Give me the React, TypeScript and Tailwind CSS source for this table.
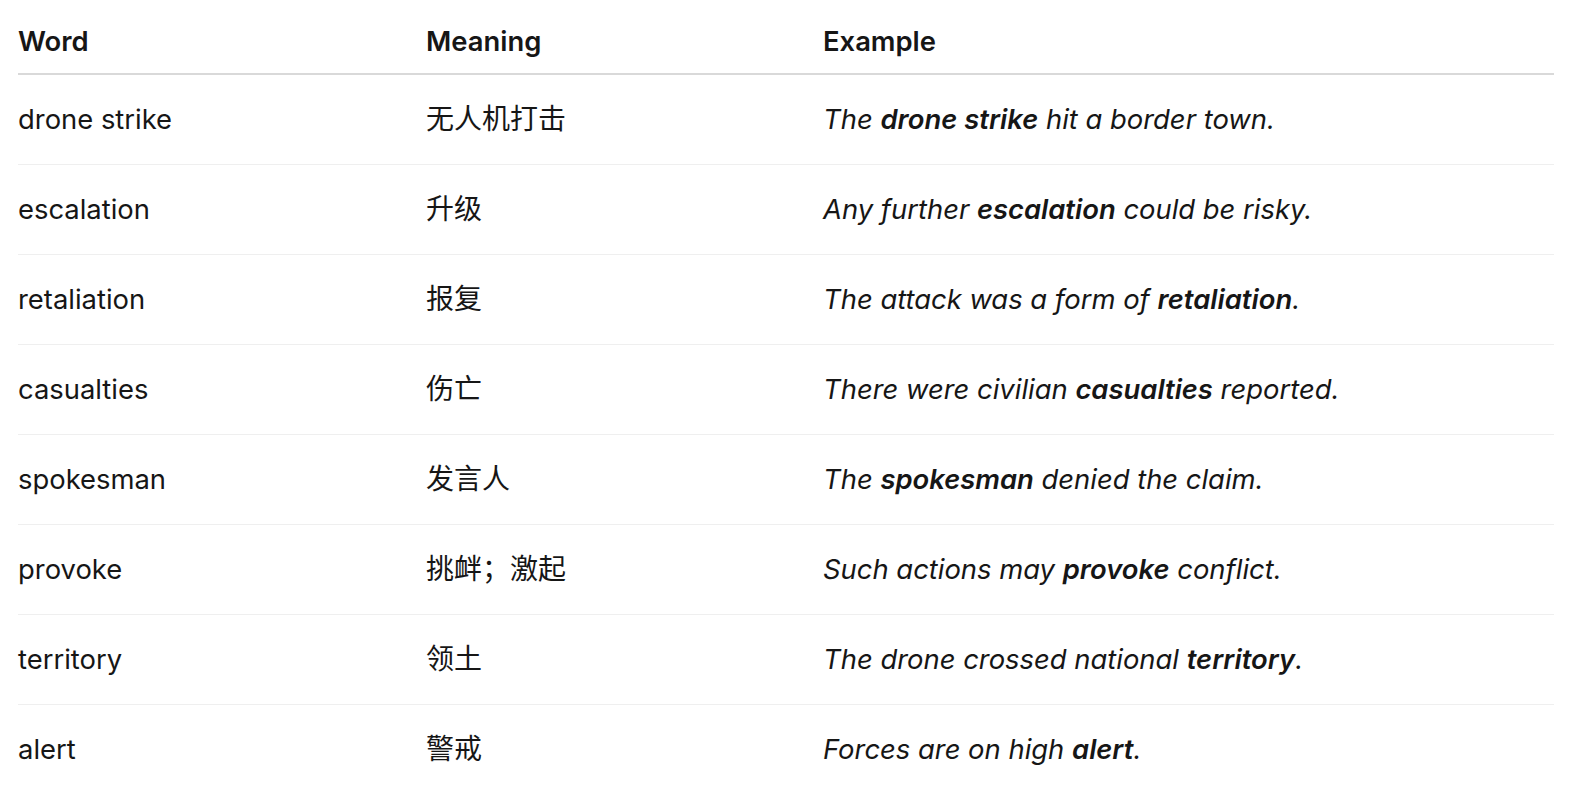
const rows: { word: string; meaning: string; example: [string, string, string] }[] = [
  { word: "drone strike", meaning: "无人机打击", example: ["The ", "drone strike", " hit a border town."] },
  { word: "escalation", meaning: "升级", example: ["Any further ", "escalation", " could be risky."] },
  { word: "retaliation", meaning: "报复", example: ["The attack was a form of ", "retaliation", "."] },
  { word: "casualties", meaning: "伤亡", example: ["There were civilian ", "casualties", " reported."] },
  { word: "spokesman", meaning: "发言人", example: ["The ", "spokesman", " denied the claim."] },
  { word: "provoke", meaning: "挑衅；激起", example: ["Such actions may ", "provoke", " conflict."] },
  { word: "territory", meaning: "领土", example: ["The drone crossed national ", "territory", "."] },
  { word: "alert", meaning: "警戒", example: ["Forces are on high ", "alert", "."] },
];

export default function App() {
  return (
    <div
      className="min-h-screen bg-white pl-[18px] pr-[22px] text-[#161616]"
      style={{ fontFamily: 'Inter, "Noto Sans CJK SC", sans-serif' }}
    >
      <table className="w-full border-collapse text-left text-[27.4px] leading-[42px]">
        <thead>
          <tr className="border-b-2 border-[#d9d9d9]">
            <th className="w-[408px] pt-[20px] pb-[11px] font-semibold">Word</th>
            <th className="w-[397px] pt-[20px] pb-[11px] font-semibold">Meaning</th>
            <th className="pt-[20px] pb-[11px] font-semibold">Example</th>
          </tr>
        </thead>
        <tbody>
          {rows.map((r, i) => (
            <tr key={r.word} className={i < rows.length - 1 ? "border-b border-[#efefef]" : ""}>
              <td className="h-[90px] align-middle">{r.word}</td>
              <td className="h-[90px] align-middle text-[28px]">{r.meaning}</td>
              <td className="h-[90px] align-middle italic">
                {r.example[0]}
                <strong className="font-semibold">{r.example[1]}</strong>
                {r.example[2]}
              </td>
            </tr>
          ))}
        </tbody>
      </table>
    </div>
  );
}
